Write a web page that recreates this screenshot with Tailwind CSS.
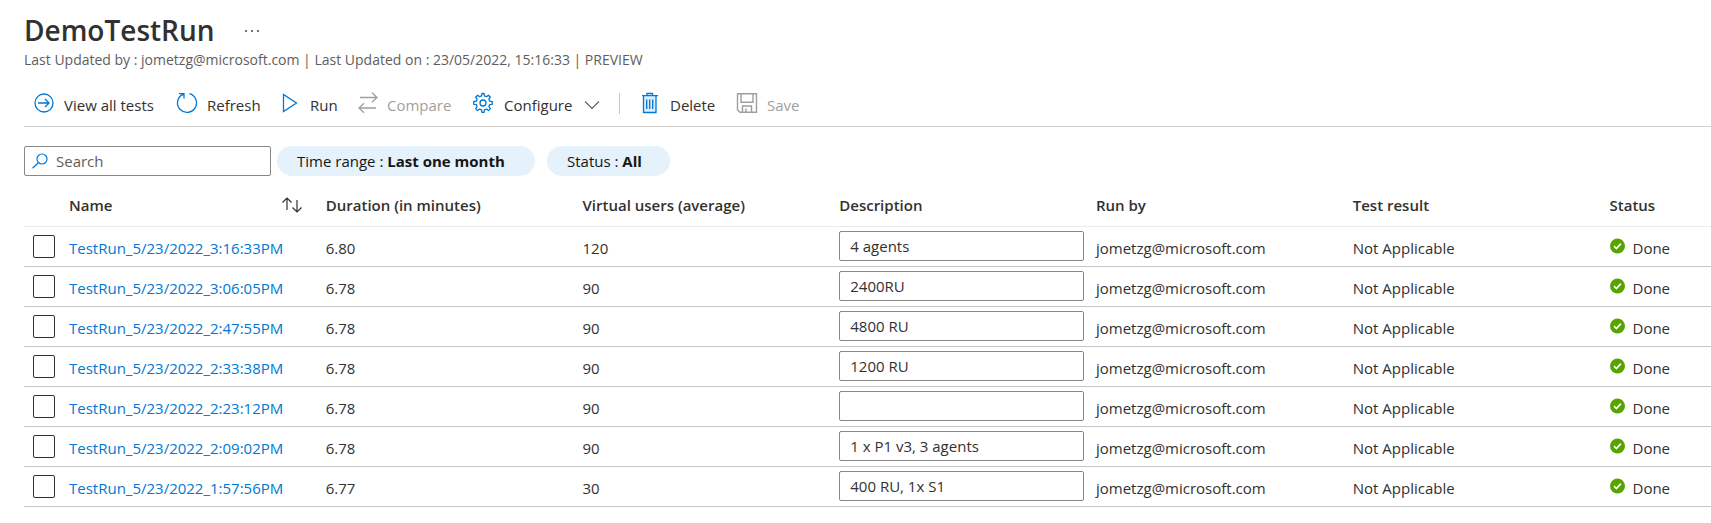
<!DOCTYPE html>
<html lang="en">
<head>
<meta charset="utf-8">
<title>DemoTestRun</title>
<script src="https://cdn.jsdelivr.net/npm/@tailwindcss/browser@4"></script>
</head>
<body class="bg-white pl-6 font-['Open_Sans','Noto_Sans',sans-serif] text-[15px] leading-5 text-[#323130]">
<header class="pt-3">
  <div class="flex items-center gap-7">
    <h1 class="text-[28px] leading-9 font-semibold">DemoTestRun</h1>
    <button type="button" aria-label="More" class="h-4 w-4">
      <svg viewBox="0 0 16 16" class="h-4 w-4" fill="#323130"><circle cx="3" cy="9" r="0.9"/><circle cx="9" cy="9" r="0.9"/><circle cx="15" cy="9" r="0.9"/></svg>
    </button>
  </div>
  <p class="mt-0.5 text-[14px] leading-5 text-[#605e5c]">Last Updated by : jometzg@microsoft.com | Last Updated on : 23/05/2022, 15:16:33 | PREVIEW</p>
</header>

<div role="toolbar" aria-label="Test actions" class="mt-3 flex h-[45px] items-center border-b border-[#d2d0ce] pl-2 pb-0.5">
  <button type="button" class="flex w-[143px] items-center gap-2">
    <svg viewBox="0 0 24 24" class="h-6 w-6" fill="none" stroke="#0078d4" stroke-width="1.3"><circle cx="12" cy="12" r="9"/><path d="M6 12h11M13 8l4 4-4 4"/></svg>
    <span class="pt-1">View all tests</span>
  </button>
  <button type="button" class="flex w-[105px] items-center gap-2">
    <svg viewBox="0 0 24 24" class="h-6 w-6" fill="none" stroke="#0078d4" stroke-width="1.3"><path d="M14.500 2.700A9.500 9.500 0 1 1 7.300 3.600M4 2.600h5V7.500M9 2.600L7.300 4.200"/></svg>
    <span class="pt-1">Refresh</span>
  </button>
  <button type="button" class="flex w-[77px] items-center gap-1.5">
    <svg viewBox="0 0 24 24" class="h-6 w-6" fill="none" stroke="#0078d4" stroke-width="1.3"><path d="M3.500 3.500v17l13-8.500z"/></svg>
    <span class="pt-1">Run</span>
  </button>
  <button type="button" disabled class="flex w-[115px] items-center gap-1.5 text-[#a19f9d]">
    <svg viewBox="0 0 24 24" class="h-6 w-6" fill="none" stroke="#a19f9d" stroke-width="1.3"><path d="M3 6.500h17M15 1.800L20 6.500l-5 4.700M19 17H2M7 12.300L2 17l5 4.700"/></svg>
    <span class="pt-1">Compare</span>
  </button>
  <button type="button" class="flex w-[147px] items-center">
    <svg viewBox="0 0 24 24" class="mr-2 h-6 w-6" fill="none" stroke="#0078d4" stroke-width="1.3" stroke-linejoin="round"><path d="M9.600 4.900L9.900 2.500h2.200l.3 2.400 2 .8 2-1.500 2 2-1.500 2 .8 2 2.500.3v2.800l-2.500.3-.8 2 1.500 2-2 2-2-1.500-2 .8-.3 2.400H9.900l-.3-2.400-2-.8-2 1.500-2-2 1.500-2-.8-2-2.500-.3v-2.800l2.500-.3.8-2-1.500-2 2-2 2 1.500z"/><circle cx="11" cy="12" r="3"/></svg>
    <span class="pt-1">Configure</span>
    <svg viewBox="0 0 16 16" class="mt-1 ml-3 h-4 w-4" fill="none" stroke="#605e5c" stroke-width="1.1"><path d="M1 4.500l7 7 7-7"/></svg>
  </button>
  <div class="h-[21px] w-px bg-[#c8c6c4]"></div>
  <button type="button" class="ml-[18px] flex w-[97px] items-center gap-2">
    <svg viewBox="0 0 24 24" class="h-6 w-6" fill="none" stroke="#0078d4" stroke-width="1.3"><path fill="#deecf9" d="M5.500 5v16.500h12.500V5"/><path d="M4 4.700h16M9 4.500V2.500h5.500v2M8.700 8.500v9.500M11.700 8.500v9.500M14.700 8.500v9.500"/></svg>
    <span class="pt-1">Delete</span>
  </button>
  <button type="button" disabled class="flex items-center gap-2 text-[#a19f9d]">
    <svg viewBox="0 0 24 24" class="h-6 w-6" fill="none" stroke="#a19f9d" stroke-width="1.4"><path d="M2.500 2.700h19v18.600H5L2.500 18.800zM6 3v8.300h12V3M7.500 21v-6h9v6M11 21v-3.500"/></svg>
    <span class="pt-1">Save</span>
  </button>
</div>

<div class="flex items-center gap-3 pt-[19px]">
  <label class="-mr-1.5 flex h-[30px] w-[247px] items-center gap-2 rounded-xs border border-[#8a8886] px-[7px]">
    <svg viewBox="0 0 16 16" class="h-4 w-4 shrink-0" fill="none" stroke="#0078d4" stroke-width="1.2"><circle cx="10" cy="6" r="5"/><path d="M6.300 9.700L0.500 15.300"/></svg>
    <input type="search" placeholder="Search" aria-label="Search" class="w-full min-w-0 outline-none placeholder:text-[#605e5c]">
  </label>
  <button type="button" class="h-[30px] min-w-[258px] rounded-full bg-[#e5f1fb] px-5 text-left text-[#161616]">Time range : <b class="font-bold">Last one month</b></button>
  <button type="button" class="h-[30px] min-w-[123px] rounded-full bg-[#e5f1fb] px-5 text-left text-[#161616]">Status : <b class="font-bold">All</b></button>
</div>

<table class="mt-2 w-full table-fixed border-collapse text-left">
  <colgroup>
    <col class="w-[45px]"><col class="w-[15.22%]"><col class="w-[15.22%]"><col class="w-[15.22%]"><col class="w-[15.22%]"><col class="w-[15.22%]"><col class="w-[15.22%]"><col>
  </colgroup>
  <thead>
    <tr class="h-[42px] border-b border-[#edebe9]">
      <td></td>
      <th scope="col" class="p-0 font-semibold">
        <button type="button" class="flex w-full items-center justify-between pr-6">Name
          <svg viewBox="0 0 20 16" class="h-4 w-5" fill="none" stroke="#323130" stroke-width="1.2"><path d="M5 13V1M0.500 5.500L5 1l4.500 4.500M15 3v12M10.500 10.500L15 15l4.500-4.500"/></svg>
        </button>
      </th>
      <th scope="col" class="p-0 font-semibold">Duration (in minutes)</th>
      <th scope="col" class="p-0 font-semibold">Virtual users (average)</th>
      <th scope="col" class="p-0 font-semibold">Description</th>
      <th scope="col" class="p-0 font-semibold">Run by</th>
      <th scope="col" class="p-0 font-semibold">Test result</th>
      <th scope="col" class="p-0 font-semibold">Status</th>
    </tr>
  </thead>
  <tbody id="runs"></tbody>
</table>

<script>
  const runs = [
    ['3:16:33PM', '6.80', '120', '4 agents'],
    ['3:06:05PM', '6.78', '90', '2400RU'],
    ['2:47:55PM', '6.78', '90', '4800 RU'],
    ['2:33:38PM', '6.78', '90', '1200 RU'],
    ['2:23:12PM', '6.78', '90', ''],
    ['2:09:02PM', '6.78', '90', '1 x P1 v3, 3 agents'],
    ['1:57:56PM', '6.77', '30', '400 RU, 1x S1'],
  ];
  document.getElementById('runs').innerHTML = runs.map(([time, duration, users, note]) => `
    <tr class="h-10 border-b border-[#c8c6c4]">
      <td class="p-0 pl-[9px]"><input type="checkbox" aria-label="Select TestRun_5/23/2022_${time}" class="block h-[23px] w-[22px] appearance-none rounded-xs border border-[#323130] checked:bg-[#0078d4]"></td>
      <td class="p-0 pt-1"><a href="#" class="text-[#0078d4]">TestRun_5/23/2022_${time}</a></td>
      <td class="p-0 pt-1">${duration}</td>
      <td class="p-0 pt-1">${users}</td>
      <td class="p-0 pr-3"><input type="text" value="${note}" aria-label="Description of TestRun_5/23/2022_${time}" class="block h-[30px] w-full rounded-xs border border-[#8a8886] px-2.5"></td>
      <td class="p-0 pt-1">jometzg@microsoft.com</td>
      <td class="p-0 pt-1">Not Applicable</td>
      <td class="p-0"><div class="flex items-center gap-2">
        <svg viewBox="0 0 16 16" class="h-4 w-[15px]"><circle cx="8" cy="8" r="8" fill="#57a300"/><path d="M4.300 8.200l2.500 2.600 4.800-5.300" fill="none" stroke="#fff" stroke-width="1.800"/></svg>
        <span class="pt-1">Done</span></div></td>
    </tr>`).join('');
</script>
</body>
</html>
